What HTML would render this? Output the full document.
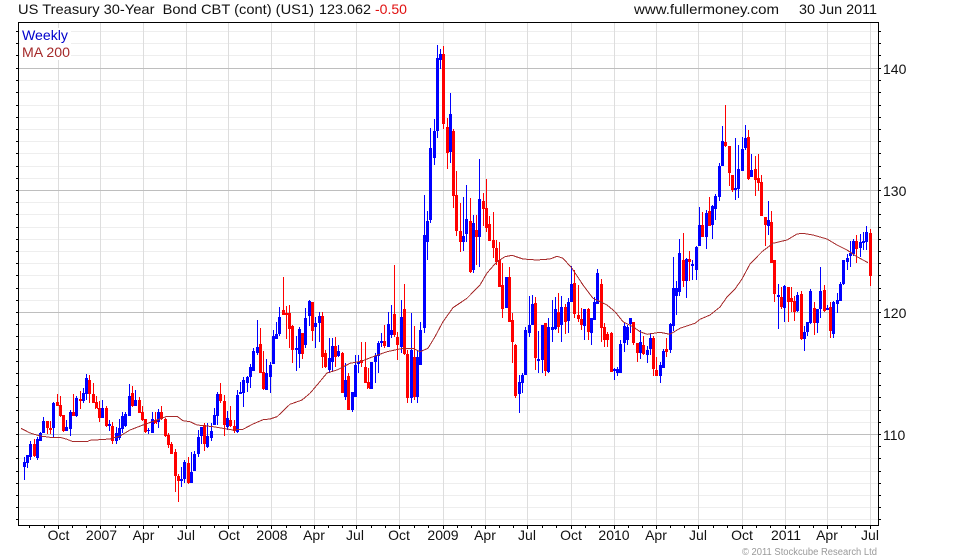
<!DOCTYPE html>
<html lang="en"><head><meta charset="utf-8"><title>US Treasury 30-Year Bond</title>
<style>
html,body{margin:0;padding:0;background:#fff;width:960px;height:560px;overflow:hidden}
svg{display:block;position:absolute;left:0;top:0}
text{font-family:"Liberation Sans",Arial,sans-serif;font-size:14px;fill:#111;white-space:pre}
.s{shape-rendering:crispEdges;fill:none}
</style></head><body>
<svg width="960" height="560" viewBox="0 0 960 560" xmlns="http://www.w3.org/2000/svg">
<path class="s" stroke="#eeeeee" stroke-width="1" d="M19 31.5H878M19 43.5H878M19 55.5H878M19 80.5H878M19 92.5H878M19 105.5H878M19 117.5H878M19 129.5H878M19 141.5H878M19 153.5H878M19 166.5H878M19 178.5H878M19 202.5H878M19 214.5H878M19 227.5H878M19 239.5H878M19 251.5H878M19 263.5H878M19 275.5H878M19 288.5H878M19 300.5H878M19 324.5H878M19 336.5H878M19 349.5H878M19 361.5H878M19 373.5H878M19 385.5H878M19 397.5H878M19 410.5H878M19 422.5H878M19 446.5H878M19 458.5H878M19 471.5H878M19 483.5H878M19 495.5H878M19 507.5H878M19 519.5H878"/>
<path class="s" stroke="#dddddd" stroke-width="1" d="M58.5 23V525M100.5 23V525M143.5 23V525M186.5 23V525M228.5 23V525M271.5 23V525M314.5 23V525M356.5 23V525M399.5 23V525M443.5 23V525M485.5 23V525M527.5 23V525M571.5 23V525M614.5 23V525M656.5 23V525M698.5 23V525M742.5 23V525M785.5 23V525M827.5 23V525M870.5 23V525"/>
<path class="s" stroke="#bebebe" stroke-width="1" d="M19 68.5H878M19 190.5H878M19 312.5H878M19 434.5H878"/>
<rect x="20" y="28" width="51" height="32" fill="#fff"/>
<path class="s" stroke="#0000ff" stroke-width="1" d="M24.5 457V480M23.5 462V467M25.5 462V467M27.5 455V468M26.5 455V463M28.5 455V463M30.5 441V460M29.5 444V457M31.5 444V457M37.5 437V460M36.5 439V458M38.5 439V458M40.5 432V441M39.5 433V441M41.5 433V441M43.5 417V433M42.5 421V433M44.5 421V433M53.5 402V438M52.5 403V428M54.5 403V428M66.5 420V431M65.5 427V431M67.5 427V431M70.5 410V436M69.5 412V429M71.5 412V429M76.5 396V417M75.5 398V416M77.5 398V416M83.5 388V403M82.5 393V401M84.5 393V401M86.5 374V400M85.5 378V394M87.5 378V394M102.5 400V418M101.5 408V418M103.5 408V418M109.5 420V431M108.5 424V426M110.5 424V426M116.5 427V444M115.5 433V441M117.5 433V441M119.5 419V440M118.5 428V438M120.5 428V438M122.5 412V433M121.5 416V429M123.5 416V429M125.5 412V427M124.5 414V426M126.5 414V426M129.5 384V416M128.5 396V416M130.5 396V416M135.5 390V406M134.5 400V406M136.5 400V406M148.5 428V434M147.5 430V431M149.5 430V431M152.5 412V433M151.5 419V433M153.5 419V433M158.5 409V428M157.5 412V422M159.5 412V422M181.5 467V487M180.5 479V481M182.5 479V481M184.5 460V483M183.5 462V479M185.5 462V479M191.5 452V483M190.5 472V483M192.5 472V483M194.5 451V471M193.5 454V471M195.5 454V471M198.5 430V457M197.5 437V454M199.5 437V454M201.5 427V444M200.5 427V436M202.5 427V436M207.5 423V448M206.5 436V447M208.5 436V447M211.5 423V441M210.5 431V438M212.5 431V438M214.5 408V425M213.5 415V425M215.5 415V425M217.5 392V425M216.5 394V416M218.5 394V416M227.5 411V430M226.5 418V427M228.5 418V427M237.5 390V433M236.5 395V432M238.5 395V432M240.5 382V394M239.5 392V394M241.5 392V394M243.5 377V407M242.5 380V393M244.5 380V393M247.5 376V392M246.5 377V383M248.5 377V383M250.5 364V388M249.5 367V377M251.5 367V377M253.5 348V371M252.5 351V371M254.5 351V371M257.5 320V355M256.5 347V353M258.5 347V353M266.5 359V390M265.5 373V390M267.5 373V390M270.5 362V393M269.5 365V377M271.5 365V377M273.5 330V364M272.5 336V364M274.5 336V364M276.5 322V339M275.5 334V339M277.5 334V339M279.5 307V336M278.5 317V334M280.5 317V334M296.5 336V371M295.5 348V350M297.5 348V350M299.5 327V368M298.5 329V354M300.5 329V354M305.5 308V348M304.5 318V345M306.5 318V345M309.5 300V326M308.5 301V316M310.5 301V316M315.5 317V348M314.5 323V327M316.5 323V327M319.5 312V342M318.5 316V323M320.5 316V323M329.5 338V373M328.5 358V370M330.5 358V370M332.5 338V372M331.5 346V362M333.5 346V362M338.5 345V357M337.5 351V356M339.5 351V356M345.5 363V400M344.5 380V397M346.5 380V397M352.5 392V412M351.5 392V410M353.5 392V410M355.5 355V397M354.5 365V397M356.5 365V397M358.5 355V373M357.5 362V364M359.5 362V364M371.5 362V389M370.5 362V389M372.5 362V389M375.5 353V383M374.5 356V362M376.5 356V362M378.5 341V373M377.5 343V356M379.5 343V356M381.5 333V347M380.5 341V343M382.5 341V343M388.5 312V347M387.5 324V347M389.5 324V347M391.5 305V338M390.5 330V335M392.5 330V335M401.5 300V353M400.5 317V347M402.5 317V347M411.5 313V403M410.5 350V398M412.5 350V398M417.5 350V403M416.5 357V397M418.5 357V397M420.5 322V365M419.5 330V365M421.5 330V365M424.5 195V333M423.5 235V328M425.5 235V328M427.5 211V260M426.5 221V242M428.5 221V242M430.5 128V223M429.5 148V220M431.5 148V220M434.5 119V165M433.5 131V158M435.5 131V158M437.5 45V138M436.5 58V131M438.5 58V131M440.5 49V69M439.5 54V60M441.5 54V60M450.5 93V163M449.5 114V152M451.5 114V152M463.5 197V251M462.5 236V242M464.5 236V242M466.5 185V242M465.5 219V234M467.5 219V234M473.5 215V273M472.5 223V270M474.5 223V270M479.5 159V267M478.5 199V237M480.5 199V237M506.5 277V308M505.5 277V308M507.5 277V308M519.5 375V413M518.5 382V394M520.5 382V394M522.5 373V393M521.5 375V383M523.5 375V383M525.5 327V375M524.5 330V375M526.5 330V375M529.5 296V337M528.5 325V333M530.5 325V333M532.5 295V325M531.5 304V325M533.5 304V325M538.5 331V373M537.5 359V361M539.5 359V361M542.5 325V373M541.5 325V360M543.5 325V360M548.5 318V373M547.5 327V372M549.5 327V372M552.5 300V342M551.5 327V330M553.5 327V330M555.5 297V330M554.5 309V329M556.5 309V329M561.5 296V342M560.5 307V325M562.5 307V325M568.5 298V333M567.5 302V321M569.5 302V321M571.5 266V302M570.5 284V302M572.5 284V302M584.5 309V340M583.5 309V326M585.5 309V326M591.5 318V345M590.5 318V333M592.5 318V333M594.5 297V320M593.5 302V320M595.5 302V320M597.5 269V304M596.5 273V304M598.5 273V304M614.5 368V380M613.5 369V371M615.5 369V371M617.5 367V376M616.5 369V373M618.5 369V373M620.5 340V373M619.5 344V373M621.5 344V373M624.5 323V352M623.5 326V343M625.5 326V343M627.5 325V345M626.5 327V340M628.5 327V340M630.5 318V333M629.5 318V324M631.5 318V324M640.5 330V359M639.5 342V353M641.5 342V353M647.5 346V363M646.5 350V355M648.5 350V355M650.5 333V355M649.5 338V349M651.5 338V349M660.5 362V383M659.5 365V376M661.5 365V376M663.5 349V368M662.5 351V368M664.5 351V368M670.5 323V353M669.5 324V350M671.5 324V350M673.5 257V331M672.5 288V326M674.5 288V326M676.5 281V315M675.5 288V296M677.5 288V296M679.5 239V296M678.5 253V292M680.5 253V292M686.5 258V298M685.5 259V281M687.5 259V281M692.5 260V280M691.5 264V266M693.5 264V266M696.5 246V280M695.5 247V270M697.5 247V270M699.5 207V246M698.5 225V246M700.5 225V246M706.5 210V249M705.5 213V237M707.5 213V237M712.5 205V239M711.5 206V225M713.5 206V225M715.5 194V220M714.5 196V209M716.5 196V209M719.5 163V201M718.5 166V197M720.5 166V197M722.5 126V166M721.5 141V166M723.5 141V166M735.5 138V200M734.5 188V190M736.5 188V190M738.5 145V198M737.5 169V189M739.5 169V189M742.5 137V171M741.5 149V171M743.5 149V171M745.5 125V150M744.5 138V148M746.5 138V148M751.5 154V177M750.5 170V177M752.5 170V177M768.5 201V235M767.5 220V226M769.5 220V226M778.5 284V329M777.5 295V297M779.5 295V297M784.5 285V322M783.5 286V308M785.5 286V308M797.5 292V312M796.5 295V311M798.5 295V311M804.5 326V351M803.5 332V339M805.5 332V339M807.5 322V336M806.5 322V332M808.5 322V332M810.5 289V324M809.5 291V323M811.5 291V323M817.5 309V333M816.5 309V323M818.5 309V323M820.5 267V318M819.5 291V309M821.5 291V309M827.5 305V310M826.5 308V310M828.5 308V310M833.5 301V338M832.5 302V334M834.5 302V334M837.5 293V313M836.5 300V304M838.5 300V304M840.5 282V301M839.5 284V301M841.5 284V301M843.5 260V285M842.5 260V284M844.5 260V284M847.5 254V270M846.5 258V262M848.5 258V262M850.5 241V267M849.5 253V256M851.5 253V256M853.5 239V256M852.5 241V254M854.5 241V254M860.5 234V257M859.5 242V248M861.5 242V248M863.5 232V250M862.5 241V243M864.5 241V243M866.5 226V250M865.5 232V242M867.5 232V242"/>
<path class="s" stroke="#ff0000" stroke-width="1" d="M34.5 439V457M33.5 444V456M35.5 444V456M47.5 421V434M46.5 421V428M48.5 421V428M50.5 421V434M49.5 428V430M51.5 428V430M57.5 394V406M56.5 402V406M58.5 402V406M60.5 396V417M59.5 405V416M61.5 405V416M63.5 415V432M62.5 415V431M64.5 415V431M73.5 394V416M72.5 412V416M74.5 412V416M80.5 391V409M79.5 399V401M81.5 399V401M89.5 375V403M88.5 380V394M90.5 380V394M93.5 383V403M92.5 394V403M94.5 394V403M96.5 396V408M95.5 402V409M97.5 402V409M99.5 401V422M98.5 408V418M100.5 408V418M106.5 406V427M105.5 408V426M107.5 408V426M112.5 422V444M111.5 426V441M113.5 426V441M132.5 386V407M131.5 393V406M133.5 393V406M139.5 397V413M138.5 400V413M140.5 400V413M142.5 406V421M141.5 412V420M143.5 412V420M145.5 419V433M144.5 419V432M146.5 419V432M155.5 412V423M154.5 420V424M156.5 420V424M161.5 406V420M160.5 412V419M162.5 412V419M165.5 418V437M164.5 419V436M166.5 419V436M168.5 433V448M167.5 435V445M169.5 435V445M171.5 442V454M170.5 444V454M172.5 444V454M175.5 449V492M174.5 452V476M176.5 452V476M178.5 474V502M177.5 476V481M179.5 476V481M188.5 457V484M187.5 463V483M189.5 463V483M204.5 423V451M203.5 425V444M205.5 425V444M220.5 383V403M219.5 394V401M221.5 394V401M224.5 395V436M223.5 401V425M225.5 401V425M230.5 406V427M229.5 420V426M231.5 420V426M234.5 420V433M233.5 426V431M235.5 426V431M260.5 328V373M259.5 344V373M261.5 344V373M263.5 351V390M262.5 372V389M264.5 372V389M283.5 277V315M282.5 310V315M284.5 310V315M286.5 306V339M285.5 313V315M287.5 313V315M289.5 305V348M288.5 313V329M290.5 313V329M292.5 325V363M291.5 326V350M293.5 326V350M302.5 333V359M301.5 333V354M303.5 333V354M312.5 302V341M311.5 302V331M313.5 302V331M322.5 312V368M321.5 316V357M323.5 316V357M325.5 350V368M324.5 353V367M326.5 353V367M335.5 337V367M334.5 346V357M336.5 346V357M342.5 352V393M341.5 353V393M343.5 353V393M348.5 373V410M347.5 376V410M349.5 376V410M361.5 342V367M360.5 360V363M362.5 360V363M365.5 342V383M364.5 367V383M366.5 367V383M368.5 368V388M367.5 382V389M369.5 382V389M384.5 325V348M383.5 341V346M385.5 341V346M394.5 265V337M393.5 314V335M395.5 314V335M397.5 332V360M396.5 337V345M398.5 337V345M404.5 284V355M403.5 309V354M405.5 309V354M407.5 350V403M406.5 354V398M408.5 354V398M414.5 326V400M413.5 357V397M415.5 357V397M443.5 46V129M442.5 54V124M444.5 54V124M447.5 118V169M446.5 127V153M448.5 127V153M453.5 129V208M452.5 131V196M454.5 131V196M456.5 171V236M455.5 195V231M457.5 195V231M460.5 203V252M459.5 231V242M461.5 231V242M470.5 198V273M469.5 221V272M471.5 221V272M476.5 215V265M475.5 230V237M477.5 230V237M483.5 193V226M482.5 201V209M484.5 201V209M486.5 179V232M485.5 208V228M487.5 208V228M489.5 216V241M488.5 224V241M490.5 224V241M493.5 212V258M492.5 240V248M494.5 240V248M496.5 240V265M495.5 248V262M497.5 248V262M499.5 242V287M498.5 260V287M500.5 260V287M502.5 263V318M501.5 285V309M503.5 285V309M509.5 267V322M508.5 277V322M510.5 277V322M512.5 313V363M511.5 320V342M513.5 320V342M515.5 344V398M514.5 345V396M516.5 345V396M535.5 297V370M534.5 303V358M536.5 303V358M545.5 323V376M544.5 323V371M546.5 323V371M558.5 293V333M557.5 312V327M559.5 312V327M565.5 304V334M564.5 307V322M566.5 307V322M574.5 270V318M573.5 283V314M575.5 283V314M578.5 285V322M577.5 315V319M579.5 315V319M581.5 308V330M580.5 319V325M582.5 319V325M588.5 308V340M587.5 309V332M589.5 309V332M601.5 279V342M600.5 284V328M602.5 284V328M604.5 323V347M603.5 327V340M605.5 327V340M607.5 332V347M606.5 334V340M608.5 334V340M611.5 332V372M610.5 333V372M612.5 333V372M633.5 322V345M632.5 322V343M634.5 322V343M637.5 343V362M636.5 343V353M638.5 343V353M643.5 336V355M642.5 345V354M644.5 345V354M653.5 336V376M652.5 338V369M654.5 338V369M656.5 357V376M655.5 370V376M657.5 370V376M666.5 338V357M665.5 349V352M667.5 349V352M683.5 233V287M682.5 260V281M684.5 260V281M689.5 251V281M688.5 259V262M690.5 259V262M702.5 212V237M701.5 225V237M703.5 225V237M709.5 197V226M708.5 211V226M710.5 211V226M725.5 105V147M724.5 142V146M726.5 142V146M729.5 146V186M728.5 146V173M730.5 146V173M732.5 175V192M731.5 175V190M733.5 175V190M748.5 130V180M747.5 137V179M749.5 137V179M755.5 156V196M754.5 169V180M756.5 169V180M758.5 154V191M757.5 178V183M759.5 178V183M761.5 175V216M760.5 182V216M762.5 182V216M765.5 217V246M764.5 217V225M766.5 217V225M771.5 211V263M770.5 222V263M772.5 222V263M774.5 260V302M773.5 260V294M775.5 260V294M781.5 287V309M780.5 297V307M782.5 297V307M788.5 287V322M787.5 287V302M789.5 287V302M791.5 287V312M790.5 298V302M792.5 298V302M794.5 296V321M793.5 301V312M795.5 301V312M801.5 291V340M800.5 294V339M802.5 294V339M814.5 302V335M813.5 308V323M815.5 308V323M824.5 285V312M823.5 290V311M825.5 290V311M830.5 302V338M829.5 307V331M831.5 307V331M856.5 235V263M855.5 241V249M857.5 241V249M870.5 229V286M869.5 233V276M871.5 233V276"/>
<polyline class="s" stroke="#a52a2a" stroke-width="1" points="21,428.3 30,433 40,436 50,437.3 60,437.3 67,439.3 73,441.7 87,441.7 90,440.3 110,439 120,436 130,430 143,425 157,420 167,416.3 177,416.3 183,420.7 190,421.7 197,425 213,426.7 223,428.3 233,430 243,429.3 253,424 263,419.7 270,419 277,416.7 290,404.3 302,400 310,393.3 319,382.7 327,373 337,370 350,363.3 362,361 373,356.7 387,351.7 403,348.3 413,348.3 420,351.7 428,348.3 435,336.7 443,321.7 453,307.7 467,298.3 480,285 487,273 497,261.7 505,256.7 512,255.3 523,259 537,260 550,259 557,256.3 563,258.3 572,268.3 583,285 593,298.3 607,305 615,311.7 623,321.7 633,326.7 640,331.7 647,334.3 660,332.3 670,334.3 680,328.3 695,323.3 700,319.3 710,315 720,307 727,297 735,289 742,279 750,264 762,251.7 773,243.3 787,240 797,234 803,233.3 813,235 827,239 837,245 847,250 857,256.7 868,262.7"/>
<path class="s" stroke="#000" stroke-width="1" d="M18.5 22V526M18 22.5H879M878.5 22V526M18 525.5H879M16 31.5H18M16 43.5H18M16 55.5H18M16 68.5H18M16 80.5H18M16 92.5H18M16 105.5H18M16 117.5H18M16 129.5H18M16 141.5H18M16 153.5H18M16 166.5H18M16 178.5H18M16 190.5H18M16 202.5H18M16 214.5H18M16 227.5H18M16 239.5H18M16 251.5H18M16 263.5H18M16 275.5H18M16 288.5H18M16 300.5H18M16 312.5H18M16 324.5H18M16 336.5H18M16 349.5H18M16 361.5H18M16 373.5H18M16 385.5H18M16 397.5H18M16 410.5H18M16 422.5H18M16 434.5H18M16 446.5H18M16 458.5H18M16 471.5H18M16 483.5H18M16 495.5H18M16 507.5H18M16 519.5H18M879 31.5H881M879 43.5H881M879 55.5H881M879 68.5H881M879 80.5H881M879 92.5H881M879 105.5H881M879 117.5H881M879 129.5H881M879 141.5H881M879 153.5H881M879 166.5H881M879 178.5H881M879 190.5H881M879 202.5H881M879 214.5H881M879 227.5H881M879 239.5H881M879 251.5H881M879 263.5H881M879 275.5H881M879 288.5H881M879 300.5H881M879 312.5H881M879 324.5H881M879 336.5H881M879 349.5H881M879 361.5H881M879 373.5H881M879 385.5H881M879 397.5H881M879 410.5H881M879 422.5H881M879 434.5H881M879 446.5H881M879 458.5H881M879 471.5H881M879 483.5H881M879 495.5H881M879 507.5H881M879 519.5H881M58.5 526V529M100.5 526V529M143.5 526V529M186.5 526V529M228.5 526V529M271.5 526V529M314.5 526V529M356.5 526V529M399.5 526V529M443.5 526V529M485.5 526V529M527.5 526V529M571.5 526V529M614.5 526V529M656.5 526V529M698.5 526V529M742.5 526V529M785.5 526V529M827.5 526V529M870.5 526V529M29.5 526V528M44.5 526V528M72.5 526V528M86.5 526V528M115.5 526V528M129.5 526V528M158.5 526V528M172.5 526V528M200.5 526V528M214.5 526V528M243.5 526V528M257.5 526V528M286.5 526V528M300.5 526V528M328.5 526V528M342.5 526V528M371.5 526V528M385.5 526V528M414.5 526V528M428.5 526V528M457.5 526V528M471.5 526V528M499.5 526V528M513.5 526V528M542.5 526V528M556.5 526V528M585.5 526V528M599.5 526V528M628.5 526V528M642.5 526V528M670.5 526V528M684.5 526V528M713.5 526V528M727.5 526V528M756.5 526V528M770.5 526V528M799.5 526V528M813.5 526V528M841.5 526V528M855.5 526V528"/>
<text x="18" y="14" textLength="296" lengthAdjust="spacingAndGlyphs" xml:space="preserve">US Treasury 30-Year  Bond CBT (cont) (US1)</text>
<text x="319" y="14" textLength="52" lengthAdjust="spacingAndGlyphs">123.062</text>
<text x="375" y="14" textLength="32" lengthAdjust="spacingAndGlyphs" style="fill:#e01010">-0.50</text>
<text x="634" y="14" textLength="145" lengthAdjust="spacingAndGlyphs">www.fullermoney.com</text>
<text x="799" y="14" textLength="78" lengthAdjust="spacingAndGlyphs">30 Jun 2011</text>
<text x="22" y="40" textLength="46" lengthAdjust="spacingAndGlyphs" style="fill:#0000cc">Weekly</text>
<text x="22" y="57" textLength="48" lengthAdjust="spacingAndGlyphs" style="fill:#a52a2a">MA 200</text>
<text x="883" y="74">140</text>
<text x="883" y="196">130</text>
<text x="883" y="318">120</text>
<text x="883" y="440">110</text>
<g text-anchor="middle">
<text x="58.5" y="540">Oct</text><text x="101.5" y="540">2007</text><text x="143.5" y="540">Apr</text><text x="186" y="540">Jul</text><text x="229" y="540">Oct</text><text x="272" y="540">2008</text><text x="314" y="540">Apr</text><text x="355" y="540">Jul</text><text x="399" y="540">Oct</text><text x="443" y="540">2009</text><text x="485" y="540">Apr</text><text x="527" y="540">Jul</text><text x="571" y="540">Oct</text><text x="614" y="540">2010</text><text x="656" y="540">Apr</text><text x="698" y="540">Jul</text><text x="742" y="540">Oct</text><text x="786" y="540">2011</text><text x="827" y="540">Apr</text><text x="870" y="540">Jul</text>
</g>
<text x="742" y="555" textLength="135" lengthAdjust="spacingAndGlyphs" style="font-size:10px;fill:#999">© 2011 Stockcube Research Ltd</text>
</svg>
</body></html>
